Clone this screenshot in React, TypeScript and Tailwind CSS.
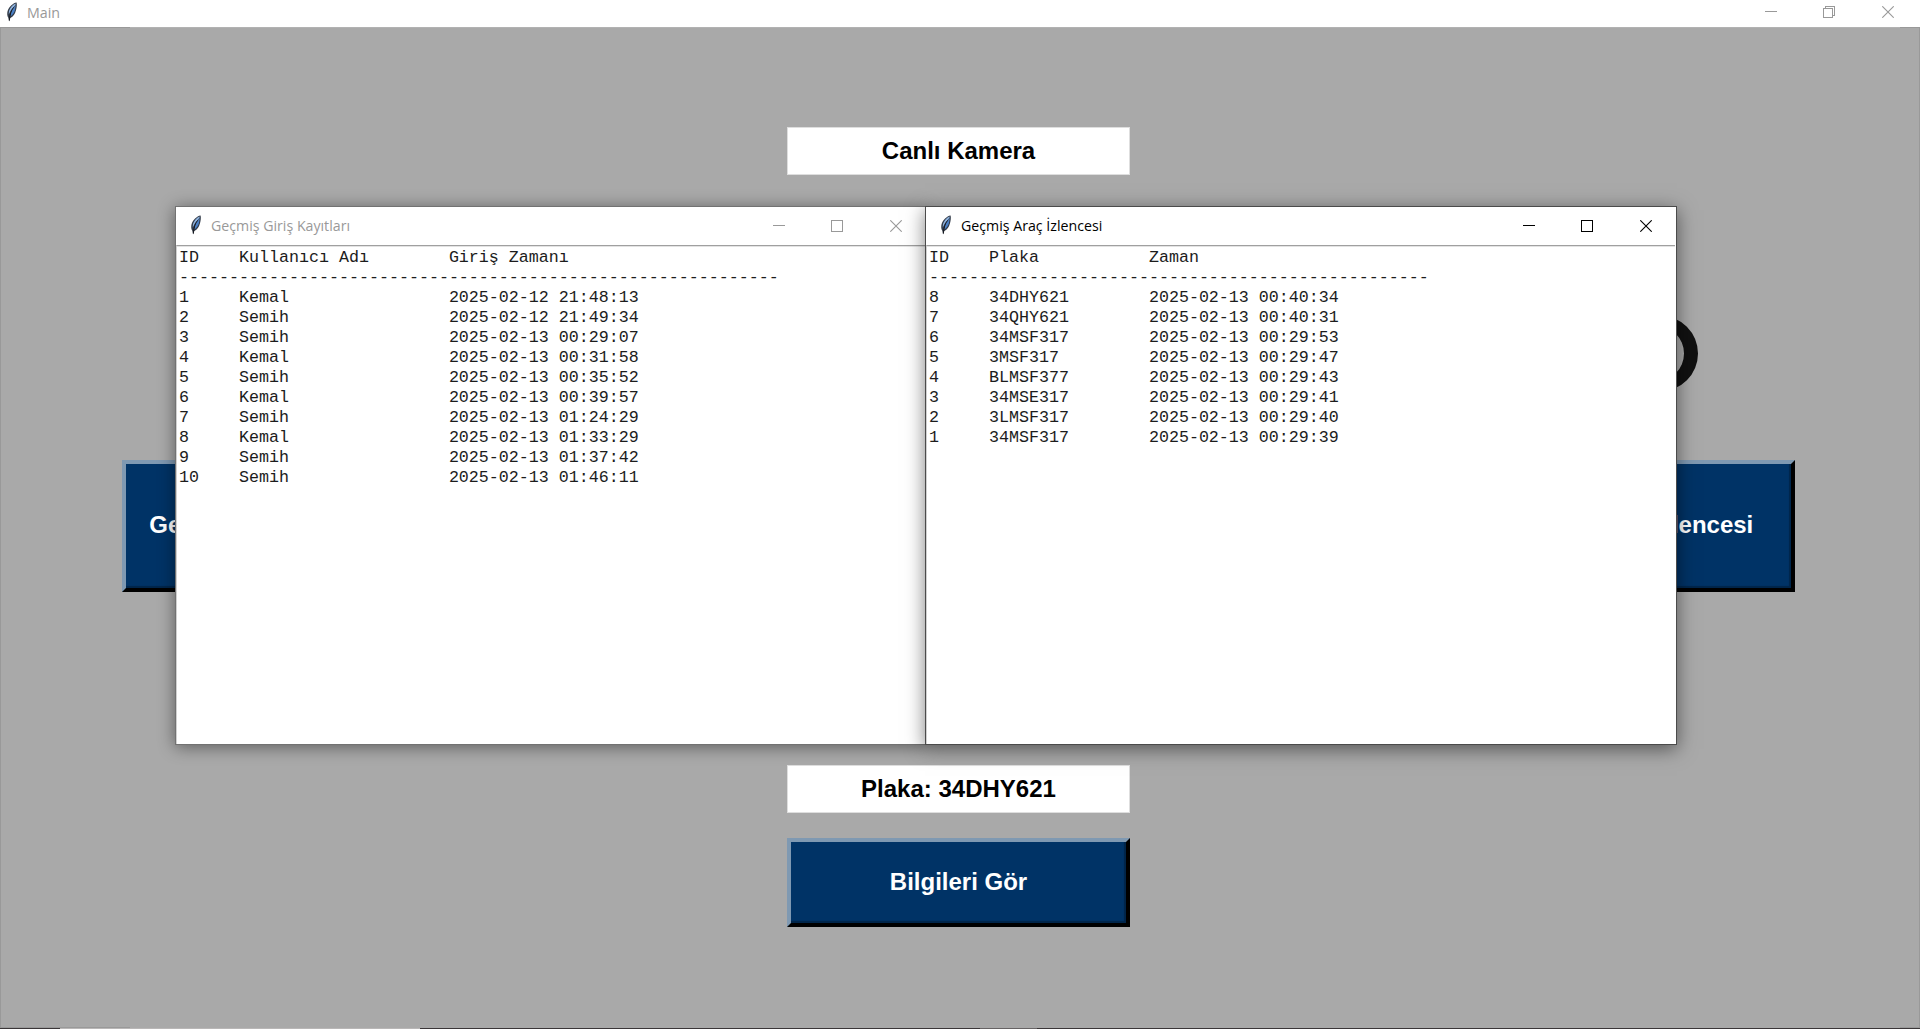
import React from "react";

type Row = [string, string, string];

const entries: Row[] = [
  ["1", "Kemal", "2025-02-12 21:48:13"],
  ["2", "Semih", "2025-02-12 21:49:34"],
  ["3", "Semih", "2025-02-13 00:29:07"],
  ["4", "Kemal", "2025-02-13 00:31:58"],
  ["5", "Semih", "2025-02-13 00:35:52"],
  ["6", "Kemal", "2025-02-13 00:39:57"],
  ["7", "Semih", "2025-02-13 01:24:29"],
  ["8", "Kemal", "2025-02-13 01:33:29"],
  ["9", "Semih", "2025-02-13 01:37:42"],
  ["10", "Semih", "2025-02-13 01:46:11"],
];

const vehicles: Row[] = [
  ["8", "34DHY621", "2025-02-13 00:40:34"],
  ["7", "34QHY621", "2025-02-13 00:40:31"],
  ["6", "34MSF317", "2025-02-13 00:29:53"],
  ["5", "3MSF317", "2025-02-13 00:29:47"],
  ["4", "BLMSF377", "2025-02-13 00:29:43"],
  ["3", "34MSE317", "2025-02-13 00:29:41"],
  ["2", "3LMSF317", "2025-02-13 00:29:40"],
  ["1", "34MSF317", "2025-02-13 00:29:39"],
];

function toText(head: Row, rows: Row[], nameWidth: number, dashes: number) {
  const line = (r: Row) => r[0].padEnd(6) + r[1].padEnd(nameWidth) + r[2];
  return [line(head), "-".repeat(dashes), ...rows.map(line)].join("\n");
}

function Feather() {
  return (
    <svg width="12" height="20" viewBox="0 0 12 20" className="shrink-0">
      <path d="M10.6 .4C6.6 1 3 4.8 1.6 9C1 11.6 1.1 13.8 2.2 15.6L3.2 19.6L4.3 16C7.4 14.6 9 12 9.9 8.6C10.6 6 11.2 3 10.6 .4Z" fill="#333c49" />
      <path d="M9.8 1.4C6.8 2.4 4.2 5.4 3 9L2.7 12.4L5 8.3L9.4 3Z" fill="#8fb2de" />
      <path d="M9.8 3L5.5 9L4.2 14.6C6.8 13 8.4 10.6 9 7.8Z" fill="#4a80c6" />
      <path d="M7.6 5.4C5.6 8 4 11.4 3.3 18.6" fill="none" stroke="#15181d" strokeWidth="1" />
    </svg>
  );
}

function Minimize() {
  return (
    <svg width="12" height="12" viewBox="0 0 12 12" shapeRendering="crispEdges">
      <path d="M0 5.5H12" stroke="currentColor" />
    </svg>
  );
}

function Maximize() {
  return (
    <svg width="12" height="12" viewBox="0 0 12 12" shapeRendering="crispEdges">
      <rect x=".5" y=".5" width="11" height="11" fill="none" stroke="currentColor" />
    </svg>
  );
}

function Restore() {
  return (
    <svg width="12" height="12" viewBox="0 0 12 12" shapeRendering="crispEdges">
      <path d="M.5 2.5H9.5V11.5H.5ZM2.5 2.5V.5H11.5V9.5H9.5" fill="none" stroke="currentColor" />
    </svg>
  );
}

function Close() {
  return (
    <svg width="12" height="12" viewBox="0 0 12 12" className="ml-px">
      <path d="M.3 .3L11.7 11.7M11.7 .3L.3 11.7" stroke="currentColor" strokeWidth="1.1" />
    </svg>
  );
}

function LogWindow({ title, text, active }: { title: string; text: string; active?: boolean }) {
  return (
    <section
      className={
        active
          ? "flex h-[539px] w-[752px] flex-col border border-[#4b4b4b] bg-white shadow-[0_4px_18px_rgba(0,0,0,0.5)]"
          : "flex h-[539px] w-[752px] flex-col border border-[#727272] bg-white shadow-[0_2px_16px_rgba(0,0,0,0.45)]"
      }
    >
      <header className={active ? "flex h-[38px] shrink-0 items-center pl-[14px] text-black" : "flex h-[38px] shrink-0 items-center pl-[14px] text-[#999999]"}>
        <div className="flex items-center pb-[2px]">
          <Feather />
          <h2 className="ml-[9px] origin-left scale-x-[0.945] font-['Open_Sans','Noto_Sans',sans-serif] text-[15px] leading-5 whitespace-nowrap">{title}</h2>
        </div>
        <div className="mr-6 ml-auto flex gap-[46px]">
          <Minimize />
          <Maximize />
          <Close />
        </div>
      </header>
      <div className="mr-[1px] flex-1 border-t border-l border-t-[#a0a0a0] border-l-[#d0d0d0]">
        <pre className="border-t border-[#e3e3e3] pt-px pl-[2px] font-['Liberation_Mono','Courier_New',monospace] text-[16.665px] leading-5 text-[#1c1c1c]">{text}</pre>
      </div>
    </section>
  );
}

function Label({ children, className }: { children: React.ReactNode; className: string }) {
  return (
    <div className={`flex h-12 w-[343px] items-center justify-center border border-[#dedede] bg-white text-black ${className}`}>
      {children}
    </div>
  );
}

function Raised({ children, className }: { children: React.ReactNode; className: string }) {
  return (
    <button
      className={`flex items-center justify-center border-4 border-t-[#7f99b2] border-r-black border-b-black border-l-[#7f99b2] bg-[#003366] pb-[2px] font-bold whitespace-nowrap text-white shadow-[inset_-2px_-2px_1px_#00254a] ${className}`}
    >
      {children}
    </button>
  );
}

export default function App() {
  return (
    <div className="relative flex h-[1029px] w-[1920px] flex-col overflow-hidden bg-[#a9a9a9]">
      <header className="flex h-[27px] shrink-0 items-center bg-white pr-[26px] pb-[3px] pl-[6px] text-[#999999]">
        <Feather />
        <h1 className="ml-[9px] origin-left scale-x-[0.95] font-['Open_Sans','Noto_Sans',sans-serif] text-[15px] leading-5">Main</h1>
        <div className="ml-auto flex gap-[46px]">
          <Minimize />
          <Restore />
          <Close />
        </div>
      </header>
      <div className="flex h-px shrink-0 justify-between bg-[#b2b2b2]">
        <div className="w-[130px] bg-[#999999]" />
        <div className="w-5 bg-[#999999]" />
      </div>
      <main className="flex flex-1 flex-col items-center border-x border-[#999999] pr-[3px] font-['Liberation_Sans',Arial,sans-serif] text-2xl font-bold">
        <Label className="mt-[99px]">Canlı Kamera</Label>
        <div className="mt-[285px] flex h-[132px] w-[1673px] justify-between">
          <Raised className="w-[304px]">Geçmiş Giriş Kayıtları</Raised>
          <Raised className="w-[336px]">Geçmiş Araç İzlencesi</Raised>
        </div>
        <Label className="mt-[173px]">Plaka: 34DHY621</Label>
        <Raised className="mt-[25px] h-[89px] w-[343px]">Bilgileri Gör</Raised>
      </main>
      <div className="flex h-px shrink-0 justify-between">
        <div className="w-[130px] bg-[#999999]" />
        <div className="w-5 bg-[#999999]" />
      </div>
      <footer className="flex h-px shrink-0 bg-[#3a3638]">
        <div className="ml-[60px] w-[360px] bg-[#b9b7b7]" />
        <div className="ml-[560px] w-[57px] bg-[#666364]" />
      </footer>

      <svg className="absolute top-[313px] left-[1620px]" width="80" height="80" viewBox="0 0 80 80">
        <path fillRule="evenodd" fill="#111111" d="M40 2.5A38 38 0 1 1 40 78.5A38 38 0 1 1 40 2.5ZM36 12.5A28 28 0 1 0 36 68.5A28 28 0 1 0 36 12.5Z" />
      </svg>

      <div className="absolute top-[206px] left-[175px]">
        <LogWindow title="Geçmiş Giriş Kayıtları" text={toText(["ID", "Kullanıcı Adı", "Giriş Zamanı"], entries, 21, 60)} />
      </div>
      <div className="absolute top-[206px] left-[925px]">
        <LogWindow active title="Geçmiş Araç İzlencesi" text={toText(["ID", "Plaka", "Zaman"], vehicles, 16, 50)} />
      </div>
    </div>
  );
}
